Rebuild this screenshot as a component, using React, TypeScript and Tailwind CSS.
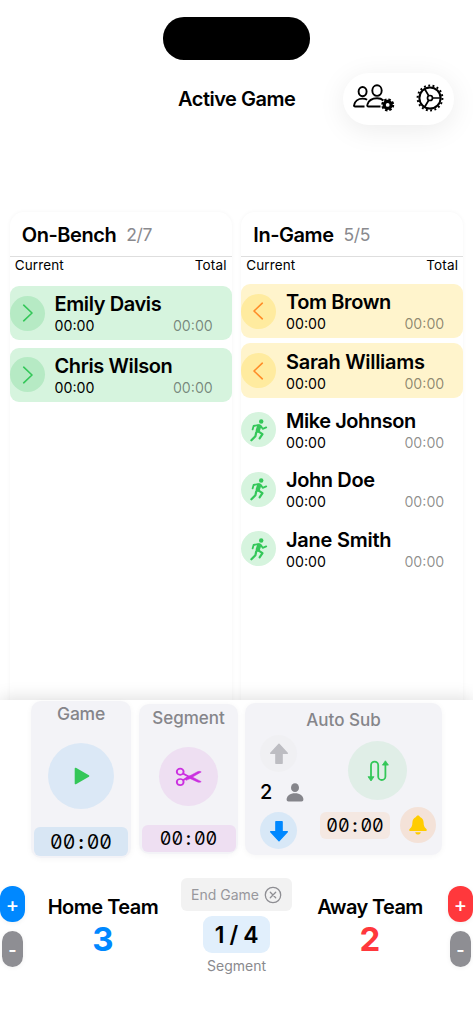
import React from "react";

function PlayersGearIcon() {
  return (
    <svg width="42" height="29" viewBox="0 0 42 29" fill="none" stroke="#000" strokeWidth="1.900">
      <ellipse cx="9.600" cy="7.600" rx="4" ry="4.600" />
      <ellipse cx="24" cy="6.600" rx="4.700" ry="5.300" />
      <path d="M11.500 22.500H2.200c-.9 0-1.300-.6-1.100-1.500C1.800 17.400 5 14.600 9.600 14.600c1.800 0 3.300.4 4.500 1.200" />
      <path d="M27.500 22.500H15.600c-1.200 0-1.600-.8-1.200-2 1.100-3.600 4.700-6.200 9.700-6.200 2.800 0 4.900.9 6.300 2.200" />
      <circle cx="34.700" cy="20.900" r="3.500" strokeWidth="3.200" />
      <circle cx="34.700" cy="20.900" r="5.400" strokeWidth="2.200" strokeDasharray="2.400 1.841" />
    </svg>
  );
}

function GearIcon() {
  return (
    <svg width="28" height="28" viewBox="0 0 28 28" fill="none" stroke="#000" className="-mt-px">
      <circle cx="14" cy="14" r="10.600" strokeWidth="2" />
      <circle cx="14" cy="14" r="12.400" strokeWidth="2" strokeDasharray="1.900 2.429" />
      <circle cx="14" cy="14" r="2.500" strokeWidth="1.700" />
      <path d="M16.500 14H25M12.700 11.800 8.400 4.500M12.700 16.200 8.400 23.500" strokeWidth="1.700" />
    </svg>
  );
}

function RunIcon() {
  return (
    <svg width="18" height="24" viewBox="0 0 18 24" fill="none" stroke="#34c759" strokeLinecap="round" strokeLinejoin="round">
      <circle cx="11.200" cy="3.500" r="2.200" fill="#34c759" stroke="none" />
      <path d="M2.600 11.400 3.600 8l4.500-.9M11 8.300l1.700 2.500 3.500-1.400" strokeWidth="1.800" />
      <path d="M9.200 8.300 7.700 12.700" strokeWidth="4.200" />
      <path d="M8.300 13.400l4.200 2.700-2.900 4.200" strokeWidth="2.200" />
      <path d="M6.200 14.600 5.400 18.200l-4 4.100" strokeWidth="2.200" />
    </svg>
  );
}

function Chevron({ left }: { left?: boolean }) {
  return (
    <svg width="12" height="18" viewBox="0 0 12 18" fill="none" strokeWidth="1.600" strokeLinecap="round" strokeLinejoin="round">
      {left ? <path d="M9.300 1.200 1 9 9.300 16.800" stroke="#ff8d28" /> : <path d="M2.700 1.200 11 9 2.700 16.800" stroke="#34c759" />}
    </svg>
  );
}

function ScissorsIcon() {
  return (
    <svg width="27" height="20" viewBox="0 0 27 22" preserveAspectRatio="none" fill="none" stroke="#cb30e0">
      <circle cx="5.200" cy="5.200" r="3.400" strokeWidth="1.900" />
      <circle cx="5.200" cy="16.600" r="3.400" strokeWidth="1.900" />
      <path d="M8 7.200l5 3M8 14.700l5-3.300" strokeWidth="2" />
      <path d="M10.500 12.300 22 5.500c1.500-.9 3-.9 4.200-.1L14.500 13l-3.500 1.700z" fill="#cb30e0" stroke="#cb30e0" strokeWidth=".6" />
      <path d="M12 9.600 15.500 10l10.700 6.100c-1.200.9-2.700.9-4.200.1l-8.200-4.200z" fill="#cb30e0" stroke="#cb30e0" strokeWidth=".6" />
    </svg>
  );
}

function SwapIcon() {
  return (
    <svg width="22" height="22" viewBox="0 0 22 22" fill="none">
      <path d="M4 18V5.200a3.600 3.600 0 0 1 7.200 0v11.200a3.600 3.600 0 0 0 7.200 0V4" stroke="#34c759" strokeWidth="1.800" />
      <path d="M1 16.700h6L4 21zM15.400 5.100h6L18.400.8z" fill="#34c759" stroke="#34c759" strokeWidth=".8" strokeLinejoin="round" />
    </svg>
  );
}

function ArrowIcon({ down }: { down?: boolean }) {
  return (
    <svg width="20" height="22" viewBox="0 0 20 22" className={down ? "rotate-180 text-[#0088ff]" : "text-[#bdbdc2]"}>
      <path d="M10 1.200 18.300 10.300H13.100V20.300H6.900V10.300H1.700Z" fill="currentColor" stroke="currentColor" strokeWidth="1.400" strokeLinejoin="round" />
    </svg>
  );
}

function PersonIcon() {
  return (
    <svg width="18" height="19" viewBox="0 0 18 19" fill="#85858b">
      <ellipse cx="9" cy="4.700" rx="4" ry="4.400" />
      <path d="M.6 16.500c0-3.500 3.500-6.200 8.400-6.200s8.400 2.700 8.400 6.200c0 1.200-.7 1.900-1.900 1.900h-13C1.300 18.400.6 17.700.6 16.500Z" />
    </svg>
  );
}

function BellIcon() {
  return (
    <svg width="18" height="20" viewBox="0 0 18 20" fill="#ffcc00">
      <path d="M9 .4c1 0 1.700.6 2 1.600 2.500 1 3.500 3.300 3.600 5.500.1 3.500.8 4.700 2.300 6 .6.5.9 1 .9 1.500 0 .7-.5 1.100-1.300 1.100h-15C.7 16.100.2 15.700.2 15c0-.5.3-1 .9-1.500 1.500-1.300 2.200-2.500 2.300-6C3.500 5.300 4.500 3 7 2 7.300 1 8 .4 9 .4ZM6.200 17.200h5.600c-.3 1.500-1.400 2.400-2.800 2.400s-2.500-.9-2.800-2.400Z" />
    </svg>
  );
}

function CloseCircleIcon() {
  return (
    <svg width="18" height="18" viewBox="0 0 18 18" fill="none" stroke="#8e8e93" strokeWidth="1.300" strokeLinecap="round">
      <circle cx="9" cy="9" r="7.700" />
      <path d="m6.300 6.300 5.400 5.400M11.700 6.300l-5.400 5.400" />
    </svg>
  );
}

type Status = "entering" | "leaving" | "playing";

function PlayerRow({ name, status, tracking }: { name: string; status: Status; tracking: string }) {
  const row = status === "entering" ? "bg-[#d6f4de]" : status === "leaving" ? "bg-[#fff4cc]" : "";
  const disc = status === "entering" ? "bg-[#b6eac4]" : status === "leaving" ? "bg-[#ffeb9f]" : "bg-[#d6f4de]";
  return (
    <div className={`flex h-[54.4px] shrink-0 items-center rounded-[9px] ${row}`}>
      <div className={`flex size-[35px] shrink-0 items-center justify-center rounded-full ${disc}`}>
        {status === "playing" ? <RunIcon /> : <Chevron left={status === "leaving"} />}
      </div>
      <div className="ml-[9.700px] mr-[19px] min-w-0 flex-1">
        <div className={`whitespace-nowrap text-[20px] font-[560] leading-6 ${tracking}`}>{name}</div>
        <div className="flex justify-between pt-px text-[14.200px] leading-[17px]">
          <span>00:00</span>
          <span className="text-black/45">00:00</span>
        </div>
      </div>
    </div>
  );
}

function Column({ title, count, children, gap }: { title: string; count: string; children: React.ReactNode; gap: string }) {
  return (
    <section className="flex h-[520px] w-[222px] flex-col rounded-t-[14px] bg-white shadow-[0_0_4px_rgba(0,0,0,0.045)]">
      <div className="flex h-[45px] items-center border-b border-[#dedede] pl-3 pt-[2px]">
        <h2 className="text-[20px] font-[580] tracking-[-0.450px]">{title}</h2>
        <span className="ml-[10px] mt-px text-[17.500px] tracking-[-0.400px] text-[#8a8a8e]">{count}</span>
      </div>
      <div className="flex h-[17px] items-center justify-between px-[5px] text-[13.500px]">
        <span className="tracking-[0.100px]">Current</span>
        <span className="tracking-[0.200px]">Total</span>
      </div>
      <div className={`flex flex-col ${gap}`}>{children}</div>
    </section>
  );
}

function MonoTime({ className }: { className: string }) {
  return (
    <span className={`leading-none [font-feature-settings:'zero','tnum'] ${className}`}>
      00<span className="mx-[3px] font-semibold">:</span>00
    </span>
  );
}

function TeamScore({ name, score, color, tracking }: { name: string; score: number; color: string; tracking: string }) {
  return (
    <div className="flex w-[130px] flex-col items-center pt-[16px]">
      <div className={`whitespace-nowrap text-[20px] font-[580] leading-[26px] ${tracking}`}>{name}</div>
      <div className={`text-[33px] font-bold leading-[38px] ${color}`}>{score}</div>
    </div>
  );
}

function ScoreButtons({ color }: { color: string }) {
  return (
    <div className="flex w-[25px] flex-col items-center gap-[9px] pt-[8px] text-white">
      <button className={`flex h-[36px] w-[25px] items-center justify-center rounded-[12px] pt-px text-[20px] font-medium shadow-[0_1px_5px_rgba(0,0,0,0.06)] ${color}`}>+</button>
      <button className="flex h-[36px] w-[21px] items-center justify-center rounded-[10.500px] bg-[#8e8e93] pt-px text-[18px] font-semibold shadow-[0_1px_5px_rgba(0,0,0,0.06)]">-</button>
    </div>
  );
}

export default function App() {
  return (
    <div className="flex h-[1024px] w-[473px] flex-col overflow-hidden bg-white font-[Inter,sans-serif] text-black">
      <div className="flex h-[73px] shrink-0 justify-center pt-[17px]">
        <div className="h-[42.500px] w-[147px] rounded-[21px] bg-black" />
      </div>
      <header className="grid h-[139px] shrink-0 grid-cols-[1fr_auto_1fr] items-start pr-[19px]">
        <span />
        <h1 className="-mr-[19px] w-[117px] whitespace-nowrap pt-[13px] text-[20px] font-[560] leading-[26px] tracking-[-0.500px]">Active Game</h1>
        <div className="flex h-[51.500px] w-[111px] items-center justify-between justify-self-end rounded-full bg-white pl-[10px] pr-[10px] shadow-[0_5px_28px_rgba(0,0,0,0.08)]">
          <PlayersGearIcon />
          <GearIcon />
        </div>
      </header>
      <main className="flex h-[488px] shrink-0 gap-[9.500px] pl-[9.800px]">
        <Column title="On-Bench" count="2/7" gap="gap-[7.200px] pt-[12px]">
          <PlayerRow name="Emily Davis" status="entering" tracking="tracking-[-0.390px]" />
          <PlayerRow name="Chris Wilson" status="entering" tracking="tracking-[-0.390px]" />
        </Column>
        <Column title="In-Game" count="5/5" gap="gap-[5px] pt-[10px]">
          <PlayerRow name="Tom Brown" status="leaving" tracking="tracking-[-0.390px]" />
          <PlayerRow name="Sarah Williams" status="leaving" tracking="tracking-[-0.300px]" />
          <PlayerRow name="Mike Johnson" status="playing" tracking="tracking-[-0.450px]" />
          <PlayerRow name="John Doe" status="playing" tracking="tracking-[-0.390px]" />
          <PlayerRow name="Jane Smith" status="playing" tracking="tracking-[-0.250px]" />
        </Column>
      </main>
      <footer className="relative flex h-[324px] shrink-0 flex-col bg-white shadow-[0_-2px_16px_rgba(0,0,0,0.13)]">
        <div className="flex h-[178px] shrink-0 items-start pl-[31px]">
          <section className="mt-[1px] flex h-[157px] w-[100px] flex-col items-center rounded-[10px] bg-[#f3f3f7] shadow-[0_1px_6px_rgba(0,0,0,0.04)]">
            <h3 className="pt-[1px] text-[17.500px] font-medium leading-[24px] tracking-[-0.250px] text-[#85858a]">Game</h3>
            <button className="mt-[17px] flex size-[66px] items-center justify-center rounded-full bg-[#dbe8f6]">
              <svg width="16" height="18" viewBox="0 0 16 18" className="ml-px">
                <path d="M1.500 1.500 14.500 9 1.500 16.500Z" fill="#34c759" stroke="#34c759" strokeWidth="1.600" strokeLinejoin="round" />
              </svg>
            </button>
            <div className="mt-[18px] flex h-[29px] w-[94px] items-center justify-center rounded-[6px] bg-[#d8e6f4] pt-[2px]"><MonoTime className="text-[19.500px]" /></div>
          </section>
          <section className="ml-[8px] mt-[4px] flex h-[150px] w-[99px] flex-col items-center rounded-[10px] bg-[#f3f3f7] shadow-[0_1px_6px_rgba(0,0,0,0.04)]">
            <h3 className="pt-[2px] text-[17px] font-medium leading-[24px] text-[#85858a]">Segment</h3>
            <button className="mt-[17px] flex size-[59px] items-center justify-center rounded-full bg-[#eedff2]"><ScissorsIcon /></button>
            <div className="mt-[19px] flex h-[27px] w-[94px] items-center justify-center rounded-[6px] bg-[#eedff2]"><MonoTime className="text-[18px]" /></div>
          </section>
          <section className="ml-[7px] mt-[3px] flex h-[152px] w-[197px] flex-col rounded-[10px] bg-[#f3f3f7] shadow-[0_1px_6px_rgba(0,0,0,0.04)]">
            <h3 className="pt-[6px] text-center text-[17px] font-medium leading-[23px] text-[#85858a]">Auto Sub</h3>
            <div className="flex">
              <div className="flex w-[75px] flex-col pl-[15px] pt-[3px]">
                <button className="flex size-[37px] items-center justify-center rounded-full bg-[#f0f0f3]"><ArrowIcon /></button>
                <div className="flex h-[40px] items-center gap-[14px]">
                  <span className="text-[20px] font-medium leading-none">2</span>
                  <PersonIcon />
                </div>
                <button className="flex size-[37px] items-center justify-center rounded-full bg-[#d8e8f7]"><ArrowIcon down /></button>
              </div>
              <div className="flex flex-col pt-[9px]">
                <button className="ml-[28px] flex size-[59px] items-center justify-center rounded-full bg-[#e0eee7]"><SwapIcon /></button>
                <div className="mt-[7px] flex items-center gap-[10px]">
                  <div className="flex h-[27px] w-[70px] items-center justify-center rounded-[6px] bg-[#f4e8e2] pt-px"><MonoTime className="text-[18px]" /></div>
                  <button className="flex size-[36px] items-center justify-center rounded-full bg-[#f4e2d8]"><BellIcon /></button>
                </div>
              </div>
            </div>
          </section>
        </div>
        <div className="flex h-[120px] items-start justify-between">
          <ScoreButtons color="bg-[#0088ff]" />
          <div><TeamScore name="Home Team" score={3} color="text-[#0088ff]" tracking="tracking-[-0.500px]" /></div>
          <div className="flex w-[111px] flex-col items-center">
            <button className="flex h-[33px] w-[111px] items-center justify-center gap-[5px] rounded-[6px] bg-[#f2f2f2] text-[14px] text-[#98989d]">End Game <CloseCircleIcon /></button>
            <div className="mt-[5px] flex h-[37px] w-[67px] items-center justify-center rounded-[9px] bg-[#e1effc] pt-px text-[23px] font-[580] tracking-[-0.400px]">1 / 4</div>
            <div className="mt-[4px] text-[14px] leading-[18px] text-[#8a8a8e]">Segment</div>
          </div>
          <div><TeamScore name="Away Team" score={2} color="text-[#ff383c]" tracking="tracking-[-0.620px]" /></div>
          <ScoreButtons color="bg-[#ff383c]" />
        </div>
      </footer>
    </div>
  );
}
